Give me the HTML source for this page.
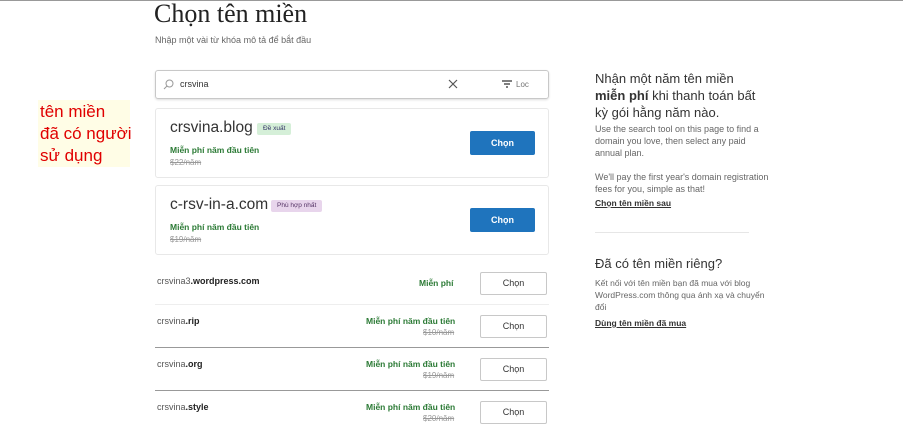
<!DOCTYPE html>
<html><head><meta charset="utf-8"><style>
*{margin:0;padding:0;box-sizing:border-box}
body{width:903px;height:427px;overflow:hidden;background:#fff;font-family:"Liberation Sans",sans-serif;position:relative;color:#222}
.a{position:absolute;white-space:nowrap}
.card{position:absolute;left:155px;width:394px;border:1px solid #e8e8e8;border-radius:3px;background:#fff}
.btn{position:absolute;background:#1f74bd;color:#fff;font-size:9px;font-weight:bold;text-align:center;border-radius:2px}
.obtn{position:absolute;left:480px;width:67px;height:23px;border:1px solid #c8c8c8;border-radius:2px;font-size:9px;text-align:center;line-height:21px;color:#333}
.g{color:#2b7a35;font-size:8.5px;font-weight:bold}
.s{color:#999;font-size:8px;text-decoration:line-through}
.d{font-size:9px;color:#555}
.d b{color:#222}
.r{font-size:9px;color:#666;line-height:12px}
</style></head><body>
<div class="a" style="left:0;top:0;width:903px;height:1px;background:#999"></div>
<div class="a" style="left:154px;top:-1px;font-family:'Liberation Serif',serif;font-size:26px;color:#222">Chọn tên miền</div>
<div class="a" style="left:155px;top:35px;font-size:9px;color:#666">Nhập một vài từ khóa mô tả để bắt đầu</div>
<div class="a" style="left:155px;top:70px;width:394px;height:29px;border:1px solid #c8c8c8;border-radius:3px;box-shadow:0 1px 2px #ddd"></div>
<svg class="a" style="left:163px;top:79px" width="11" height="11"><circle cx="6.5" cy="4.5" r="3.5" fill="none" stroke="#999"/><line x1="4" y1="7" x2="1" y2="10" stroke="#999"/></svg>
<div class="a" style="left:180px;top:79px;font-size:9px;color:#333">crsvina</div>
<svg class="a" style="left:448px;top:79px" width="10" height="10"><path d="M1 1L9 9M9 1L1 9" stroke="#555" stroke-width="1.2"/></svg>
<svg class="a" style="left:501px;top:80px" width="12" height="8"><path d="M1 1H11M3 4H9M5 7H7" stroke="#333" stroke-width="1.3"/></svg>
<div class="a" style="left:516px;top:80px;font-size:8px;color:#777">Loc</div>
<div class="a" style="left:38px;top:100px;width:92px;height:67px;background:#fffde6"></div>
<div class="a" style="left:40px;top:101px;font-size:17px;line-height:22px;color:#e00000">tên miền<br>đã có người<br>sử dụng</div>
<div class="card" style="top:108px;height:70px"></div>
<div class="a" style="left:170px;top:119px;font-size:15.5px;color:#333">crsvina.blog</div>
<div class="a" style="left:257px;top:123px;height:12px;padding:0 6px;background:#d5efd8;font-size:6.5px;line-height:12px;border-radius:2px;color:#336">Đề xuất</div>
<div class="a g" style="left:170px;top:145px">Miễn phí năm đầu tiên</div>
<div class="a s" style="left:170px;top:158px">$22/năm</div>
<div class="btn" style="left:470px;top:131px;width:65px;height:24px;line-height:24px">Chọn</div>
<div class="card" style="top:185px;height:70px"></div>
<div class="a" style="left:170px;top:196px;font-size:15.5px;color:#333">c-rsv-in-a.com</div>
<div class="a" style="left:271px;top:200px;height:12px;padding:0 6px;background:#e8d5ec;font-size:6.5px;line-height:12px;border-radius:2px;color:#536">Phù hợp nhất</div>
<div class="a g" style="left:170px;top:222px">Miễn phí năm đầu tiên</div>
<div class="a s" style="left:170px;top:235px">$19/năm</div>
<div class="btn" style="left:470px;top:208px;width:65px;height:24px;line-height:24px">Chọn</div>
<div class="a d" style="left:157px;top:276px">crsvina3<b>.wordpress.com</b></div>
<div class="a g" style="left:419px;top:278px">Miễn phí</div>
<div class="obtn" style="top:272px">Chọn</div>
<div class="a" style="left:155px;top:304px;width:394px;height:1px;background:#eee"></div>
<div class="a d" style="left:157px;top:316px">crsvina<b>.rip</b></div>
<div class="a g" style="left:366px;top:316px">Miễn phí năm đầu tiên</div>
<div class="a s" style="left:423px;top:328px">$10/năm</div>
<div class="obtn" style="top:315px">Chọn</div>
<div class="a" style="left:155px;top:347px;width:394px;height:1px;background:#999"></div>
<div class="a d" style="left:157px;top:359px">crsvina<b>.org</b></div>
<div class="a g" style="left:366px;top:359px">Miễn phí năm đầu tiên</div>
<div class="a s" style="left:423px;top:371px">$19/năm</div>
<div class="obtn" style="top:358px">Chọn</div>
<div class="a" style="left:155px;top:390px;width:394px;height:1px;background:#999"></div>
<div class="a d" style="left:157px;top:402px">crsvina<b>.style</b></div>
<div class="a g" style="left:366px;top:402px">Miễn phí năm đầu tiên</div>
<div class="a s" style="left:423px;top:414px">$20/năm</div>
<div class="obtn" style="top:401px">Chọn</div>
<div class="a" style="left:595px;top:70px;font-size:13px;line-height:17px;color:#333">Nhận một năm tên miền<br><b>miễn phí</b> khi thanh toán bất<br>kỳ gói hằng năm nào.</div>
<div class="a r" style="left:595px;top:123px">Use the search tool on this page to find a<br>domain you love, then select any paid<br>annual plan.<br><br>We'll pay the first year's domain registration<br>fees for you, simple as that!</div>
<div class="a" style="left:595px;top:198px;font-size:8.5px;font-weight:bold;text-decoration:underline;color:#333">Chọn tên miền sau</div>
<div class="a" style="left:595px;top:232px;width:154px;height:1px;background:#e6e6e6"></div>
<div class="a" style="left:595px;top:256px;font-size:13px;color:#333">Đã có tên miền riêng?</div>
<div class="a r" style="left:595px;top:277px;font-size:8.5px">Kết nối với tên miền bạn đã mua với blog<br>WordPress.com thông qua ánh xạ và chuyển<br>đổi</div>
<div class="a" style="left:595px;top:318px;font-size:8.5px;font-weight:bold;text-decoration:underline;color:#333">Dùng tên miền đã mua</div>
</body></html>
